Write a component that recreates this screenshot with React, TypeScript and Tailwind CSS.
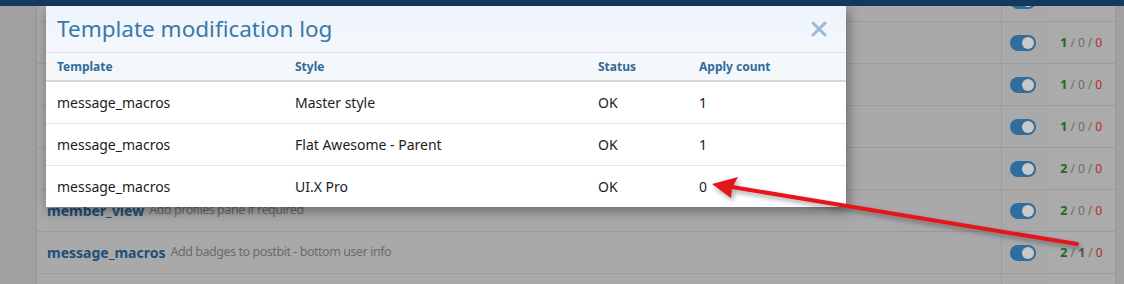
import React from "react";

interface BgRow {
  name: string;
  desc: string;
  counts: [number, number, number];
}

// rows under the modal keep no text, only their toggles and counts show
const bgRows: BgRow[] = [
  { name: "", desc: "", counts: [1, 0, 0] },
  { name: "", desc: "", counts: [1, 0, 0] },
  { name: "", desc: "", counts: [1, 0, 0] },
  { name: "", desc: "", counts: [1, 0, 0] },
  { name: "", desc: "", counts: [2, 0, 0] },
  { name: "member_view", desc: "Add profiles pane if required", counts: [2, 0, 0] },
  { name: "message_macros", desc: "Add badges to postbit - bottom user info", counts: [2, 1, 0] },
  { name: "", desc: "", counts: [2, 0, 0] },
];

const logRows = [
  { template: "message_macros", style: "Master style", status: "OK", count: 1 },
  { template: "message_macros", style: "Flat Awesome - Parent", status: "OK", count: 1 },
  { template: "message_macros", style: "UI.X Pro", status: "OK", count: 0 },
];

const font = "font-['Segoe_UI','Noto_Sans','Open_Sans',sans-serif]";

function Toggle() {
  return (
    <div className="flex h-[16px] w-[26px] items-center justify-end rounded-full bg-[#2f6d9f] pr-[2px]">
      <div className="h-[12px] w-[12px] rounded-full bg-[#c9c9c9]" />
    </div>
  );
}

function Counts({ counts }: { counts: [number, number, number] }) {
  return (
    <div className="flex items-center gap-[3px] text-[12px] text-[#6c6c6c]">
      <span className="text-[13px] font-bold text-[#1f6b1f]">{counts[0]}</span>
      <span>/</span>
      <span className={counts[1] > 0 ? "text-[13px] font-bold text-[#555]" : ""}>{counts[1]}</span>
      <span>/</span>
      <span className="text-[#b22a2a]">{counts[2]}</span>
    </div>
  );
}

function Arrow() {
  return (
    <svg className="pointer-events-none absolute left-0 top-0" width={1124} height={284}>
      <defs>
        <filter id="sh" x="-10%" y="-50%" width="120%" height="200%">
          <feDropShadow dx="2" dy="3" stdDeviation="2.5" floodColor="#000" floodOpacity="0.35" />
        </filter>
      </defs>
      <g filter="url(#sh)">
        <line x1={1077} y1={244} x2={732} y2={187} stroke="#e3171c" strokeWidth={4} strokeLinecap="round" />
        <path d="M712 184 L738 177 L732 188 L731 198 Z" fill="#e3171c" />
      </g>
    </svg>
  );
}

export default function App() {
  return (
    <div className={`relative h-[284px] w-[1124px] overflow-hidden bg-[#a0a0a0] ${font}`}>
      <div className="h-[6px] bg-[#133a5e]" />
      <div className="flex h-[278px] overflow-hidden">
        <div className="w-[37px] border-r border-[#979797] bg-[#a0a0a0]" />
        <div className="-mt-[26px] flex-1 bg-[#a9a9a9]">
          {bgRows.map((r, i) => (
            <div key={i} className="flex h-[42px] border-b border-[#9b9b9b]">
              <div className="flex flex-1 items-center gap-[5px] pl-[10px]">
                <span className="text-[14px] font-bold text-[#1d4f79]">{r.name}</span>
                <span className="text-[12.5px] tracking-[-0.45px] text-[#6b6b6b]">{r.desc}</span>
              </div>
              <div className="flex w-[47px] items-center justify-center border-l border-[#9b9b9b] pr-[4px]">
                <Toggle />
              </div>
              <div className="flex w-[68px] items-center border-r border-[#9b9b9b] bg-[#ababab] pl-[12px]">
                <Counts counts={r.counts} />
              </div>
            </div>
          ))}
        </div>
        <div className="w-[8px] bg-[#a0a0a0]" />
      </div>

      <div className="absolute left-[46px] top-[6px] w-[800px] bg-white shadow-[2px_4px_12px_rgba(0,0,0,0.4)]">
        <div className="flex h-[47px] items-center justify-between border-b border-[#d6e1eb] bg-gradient-to-b from-[#edf4fb] to-[#f4f8fd] pl-[11px] pr-[19px]">
          <h2 className="text-[22.5px] font-normal text-[#3a7aa8]">Template modification log</h2>
          <svg width={16} height={16} viewBox="0 0 16 16">
            <path d="M2 2 L14 14 M14 2 L2 14" stroke="#9cbad3" strokeWidth={3} strokeLinecap="round" />
          </svg>
        </div>
        <table className="w-full border-collapse text-left">
          <thead>
            <tr className="h-[28px] border-b-2 border-[#d3d8dd] bg-[#f5f8fb] text-[12px] font-bold text-[#2f6a98]">
              <th className="w-[249px] pl-[11px] font-bold">Template</th>
              <th className="w-[303px] font-bold">Style</th>
              <th className="w-[101px] font-bold">Status</th>
              <th className="font-bold">Apply count</th>
            </tr>
          </thead>
          <tbody>
            {logRows.map((r, i) => (
              <tr key={i} className="h-[42px] border-b border-[#e5e5e5] text-[14px] text-[#1c1c1c] last:border-b-0">
                <td className="pl-[11px]">{r.template}</td>
                <td>{r.style}</td>
                <td>{r.status}</td>
                <td>{r.count}</td>
              </tr>
            ))}
          </tbody>
        </table>
      </div>

      <Arrow />
    </div>
  );
}
